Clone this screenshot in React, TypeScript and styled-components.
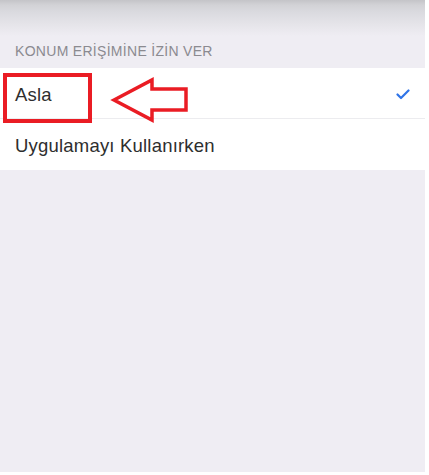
import React from 'react';
import styled, { createGlobalStyle } from 'styled-components';

const GlobalStyle = createGlobalStyle`
  html, body {
    margin: 0;
    padding: 0;
    background: #ffffff;
  }
  body {
    font-family: 'Liberation Sans', Arial, sans-serif;
  }
`;

const red = '#ea1c24';
const blue = '#2f74e8';

const Screen = styled.div`
  position: relative;
  width: 425px;
  height: 472px;
  background: #efedf3;
  overflow: hidden;
`;

const TopShade = styled.div`
  height: 36px;
  background: linear-gradient(
    #c4c4c8 0px,
    #d2d2d6 5px,
    #dadadf 12px,
    #e5e4e9 24px,
    #efedf3 36px
  );
`;

const SectionHeader = styled.div`
  padding: 7px 15px 0;
  height: 25px;
  font-size: 14px;
  color: #8b8a90;
  letter-spacing: 0.3px;
`;

const List = styled.div`
  background: #ffffff;
`;

const Row = styled.div<{ $last?: boolean }>`
  display: flex;
  align-items: center;
  justify-content: space-between;
  height: 51px;
  padding: 2px 15px 0 15px;
  box-sizing: border-box;
  font-size: 18.5px;
  letter-spacing: 0.2px;
  color: #2e2e2e;
  box-shadow: ${(p) => (p.$last ? 'none' : 'inset 0 -1px 0 #ececef')};
`;

const Check = () => (
  <svg width="14" height="11" viewBox="0 0 14 11">
    <path
      d="M1.5 5.5 L5 9 L12.5 1.5"
      fill="none"
      stroke={blue}
      strokeWidth="2.2"
      strokeLinecap="round"
      strokeLinejoin="round"
    />
  </svg>
);

const Highlight = styled.div`
  position: absolute;
  left: 3px;
  top: 73px;
  width: 89px;
  height: 50px;
  box-sizing: border-box;
  border: 4px solid ${red};
`;

const ArrowMark = styled.svg`
  position: absolute;
  left: 108px;
  top: 75px;
`;

const App: React.FC = () => {
  return (
    <>
      <GlobalStyle />
      <Screen>
        <TopShade />
        <SectionHeader>KONUM ERİŞİMİNE İZİN VER</SectionHeader>
        <List>
          <Row>
            <span>Asla</span>
            <Check />
          </Row>
          <Row $last>
            <span>Uygulamayı Kullanırken</span>
          </Row>
        </List>
        <Highlight />
        <ArrowMark width="84" height="50" viewBox="0 0 84 50">
          <polygon
            points="6,25 44,5 44,14 78,14 78,35 44,35 44,45"
            fill="#ffffff"
            stroke={red}
            strokeWidth="3.5"
            strokeLinejoin="miter"
          />
        </ArrowMark>
      </Screen>
    </>
  );
};

export default App;
